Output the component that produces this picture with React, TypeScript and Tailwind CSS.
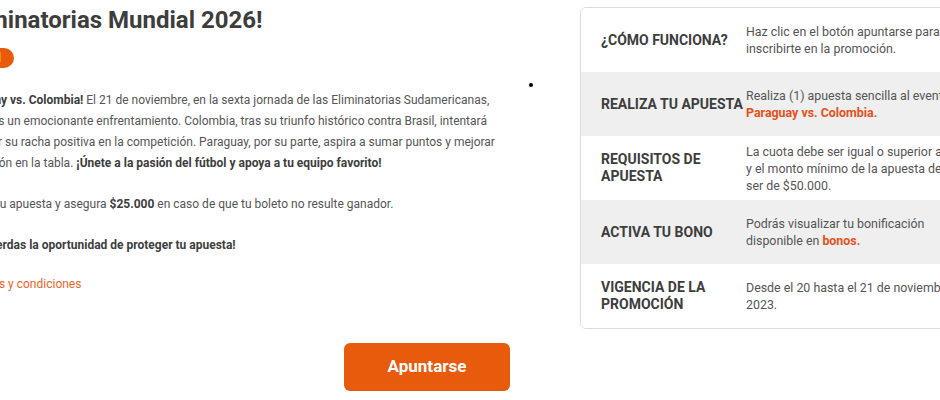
import React from 'react';

const rows = [
  {
    label: ['¿CÓMO FUNCIONA?'],
    value: (
      <>
        Haz clic en el botón apuntarse para
        <br />
        inscribirte en la promoción.
      </>
    ),
    gray: false
  },
  {
    label: ['REALIZA TU APUESTA'],
    value: (
      <>
        Realiza (1) apuesta sencilla al evento
        <br />
        <span className="font-bold text-[#e8501a]">Paraguay vs. Colombia.</span>
      </>
    ),
    gray: true
  },
  {
    label: ['REQUISITOS DE', 'APUESTA'],
    value: (
      <>
        La cuota debe ser igual o superior a 1.80
        <br />
        y el monto mínimo de la apuesta debe
        <br />
        ser de $50.000.
      </>
    ),
    gray: false
  },
  {
    label: ['ACTIVA TU BONO'],
    value: (
      <>
        Podrás visualizar tu bonificación
        <br />
        disponible en <span className="font-bold text-[#e8501a]">bonos.</span>
      </>
    ),
    gray: true
  },
  {
    label: ['VIGENCIA DE LA', 'PROMOCIÓN'],
    value: (
      <>
        Desde el 20 hasta el 21 de noviembre de
        <br />
        2023.
      </>
    ),
    gray: false
  }
];

const App: React.FC = () => {
  return (
    <div className="w-[940px] h-[400px] overflow-hidden bg-white font-['Roboto',sans-serif]">
      <div className="flex items-start">
        {/* Left column: promo copy */}
        <div className="w-[556px] -ml-[46px] shrink-0 flex flex-col">
          <h1 className="mt-[4px] text-[24px] leading-[32px] font-bold text-[#3d3d3d] whitespace-nowrap">
            ¡Eliminatorias Mundial 2026!
          </h1>
          <div className="mt-[12px] flex">
            <span className="h-[20px] px-[13px] rounded-full bg-[#e85b0c] text-white text-[12px] leading-[20px] font-bold">
              Fútbol
            </span>
          </div>

          <div className="mt-[22px] -ml-[3px] text-[12px] leading-[21px] text-[#555] whitespace-nowrap">
            <p className="pl-[2px]">
              <b className="text-[#3d3d3d]">¡Paraguay vs. Colombia!</b> El 21 de noviembre, en la sexta jornada de las Eliminatorias Sudamericanas,
            </p>
            <p className="pl-[2px]">viviremos un emocionante enfrentamiento. Colombia, tras su triunfo histórico contra Brasil, intentará</p>
            <p>mantener su racha positiva en la competición. Paraguay, por su parte, aspira a sumar puntos y mejorar</p>
            <p>
              su posición en la tabla. <b className="text-[#3d3d3d]">¡Únete a la pasión del fútbol y apoya a tu equipo favorito!</b>
            </p>
            <p className="mt-[20px]">
              Protege tu apuesta y asegura <b className="text-[#3d3d3d]">$25.000</b> en caso de que tu boleto no resulte ganador.
            </p>
            <p className="mt-[20px] font-bold text-[#3d3d3d]">¡No te pierdas la oportunidad de proteger tu apuesta!</p>
            <p className="mt-[18px] pl-[4px]">
              <a className="text-[#f0642a]">Términos y condiciones</a>
            </p>
          </div>

          <button className="mt-[48px] ml-[390px] w-[166px] h-[48px] rounded-[6px] bg-[#e85b0c] text-white text-[17px] font-bold">
            Apuntarse
          </button>
        </div>

        <div className="ml-[19px] mt-[83px] w-[4px] h-[4px] rounded-full bg-black shrink-0" />

        {/* Right column: details card */}
        <div className="ml-[47px] mt-[7px] w-[380px] shrink-0 border border-[#dcdcdc] rounded-[6px] overflow-hidden">
          {rows.map((row, i) => (
            <div
              key={i}
              className={`flex items-center h-[64px] ${row.gray ? 'bg-[#efefef]' : 'bg-white'}`}
            >
              <div className="w-[165px] pl-[20px] shrink-0 text-[14px] leading-[17px] font-bold text-[#3d3d3d]">
                {row.label.map((l, j) => (
                  <div key={j}>{l}</div>
                ))}
              </div>
              <div className="text-[12.4px] leading-[17px] text-[#555] whitespace-nowrap">{row.value}</div>
            </div>
          ))}
        </div>
      </div>
    </div>
  );
};

export default App;
